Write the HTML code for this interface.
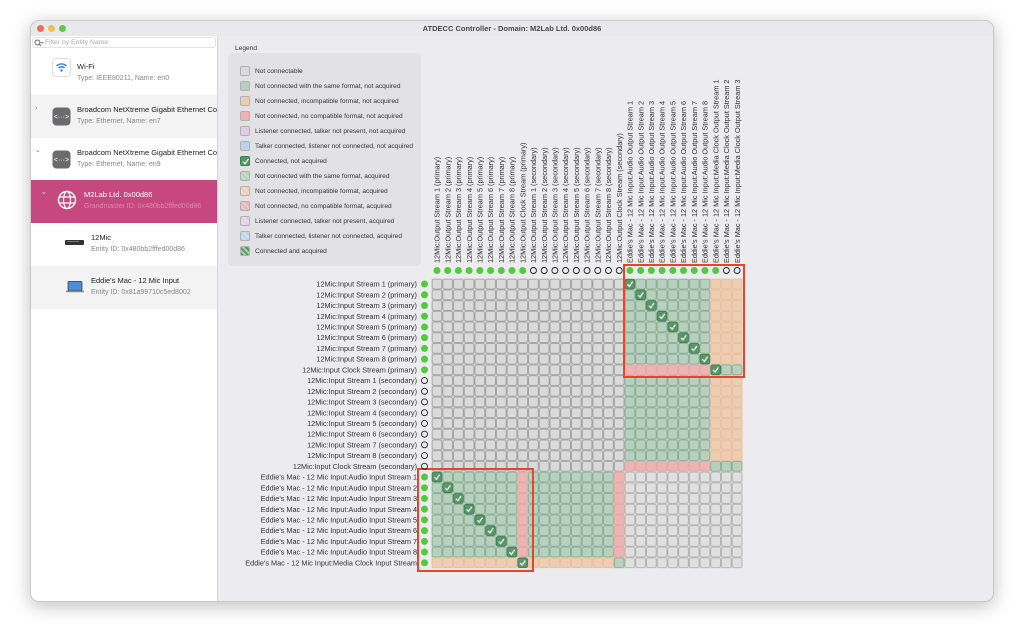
<!DOCTYPE html>
<html><head><meta charset="utf-8"><style>
*{margin:0;padding:0;box-sizing:border-box}
body{width:1024px;height:642px;background:#fff;font-family:"Liberation Sans",sans-serif;position:relative;overflow:hidden}
.win{position:absolute;left:30px;top:20px;width:964px;height:582px;border-radius:9px;background:#ececee;box-shadow:0 4px 18px rgba(0,0,0,.25);overflow:hidden;border:1px solid #c9c9c9}
.tb{position:absolute;left:0;top:0;width:100%;height:15px;background:#e9e9eb}
.tl{position:absolute;top:4px;width:7px;height:7px;border-radius:50%}
.title{position:absolute;top:3px;left:0;width:100%;text-align:center;font-size:7.5px;font-weight:bold;color:#4a4a4a}
.side{position:absolute;left:0;top:15px;width:187px;height:567px;background:#fff;border-right:1px solid #d6d6d6;overflow:hidden}
.search{position:absolute;left:1px;top:1px;width:184px;height:11px;background:#fff;border:1px solid #e3e3e3;border-radius:3px;font-size:6.8px;color:#aaa;padding-left:12px;line-height:10px}
.row{position:absolute;left:0;width:186px;height:43px;overflow:hidden}
.row .t1{position:absolute;top:10px;font-size:7.5px;color:#222;white-space:nowrap}
.row .t2{position:absolute;top:23px;font-size:7px;color:#888;white-space:nowrap}
.ic{position:absolute}
.leg-l{position:absolute;left:235px;top:45px;font-size:6.6px;color:#333}
.leg{position:absolute;left:228px;top:53px;width:193px;height:213px;background:#e2e2e4;border-radius:5px}
.li{position:absolute;left:12px;width:180px;height:11px;font-size:6.6px;color:#333;line-height:11px}
.li i{position:absolute;left:0;top:0;width:10px;height:10px;border-radius:2px;border:1px solid #b0b0b0}
.li span{position:absolute;left:15px;top:0}
</style></head><body>
<div class="win">
 <div class="tb">
  <div class="tl" style="left:6px;background:#ed6a5e"></div>
  <div class="tl" style="left:17px;background:#f5bf4f"></div>
  <div class="tl" style="left:28px;background:#61c554"></div>
  <div class="title">ATDECC Controller - Domain: M2Lab Ltd. 0x00d86</div>
 </div>
 <div class="side">
  <div class="search">Filter by Entity Name</div>
  <svg style="position:absolute;left:3px;top:3px" width="10" height="8"><circle cx="3.5" cy="3.5" r="2.5" fill="none" stroke="#666" stroke-width="1"/><line x1="5.3" y1="5.3" x2="7" y2="7" stroke="#666"/><path d="M7 3l1.2 1.2L9.4 3" stroke="#666" fill="none" stroke-width=".8"/></svg>
  <div class="row" style="top:16px;background:#fff">
   <svg class="ic" style="left:21px;top:6px" width="19" height="19"><rect x=".5" y=".5" width="18" height="18" rx="4" fill="#fff" stroke="#ddd"/><path d="M4.5 8a7 7 0 0 1 10 0M6.5 10a4.2 4.2 0 0 1 6 0" stroke="#2f7ff0" stroke-width="1.4" fill="none"/><circle cx="9.5" cy="12.5" r="1.2" fill="#2f7ff0"/></svg>
   <div class="t1" style="left:46px">Wi-Fi</div><div class="t2" style="left:46px">Type: IEEE80211, Name: en0</div>
  </div>
  <div class="row" style="top:59px;background:#f3f3f4">
   <div style="position:absolute;left:4px;top:10px;font-size:7px;color:#777">›</div>
   <svg class="ic" style="left:21px;top:12px" width="19" height="19"><rect x=".5" y=".5" width="18" height="18" rx="4" fill="#6b6b6d"/><text x="9.5" y="12" font-size="7" fill="#fff" text-anchor="middle" font-family="Liberation Sans">&lt;···&gt;</text></svg>
   <div class="t1" style="left:46px">Broadcom NetXtreme Gigabit Ethernet Cont</div><div class="t2" style="left:46px">Type: Ethernet, Name: en7</div>
  </div>
  <div class="row" style="top:102px;background:#fff">
   <div style="position:absolute;left:4px;top:8px;font-size:7px;color:#777">⌄</div>
   <svg class="ic" style="left:21px;top:12px" width="19" height="19"><rect x=".5" y=".5" width="18" height="18" rx="4" fill="#6b6b6d"/><text x="9.5" y="12" font-size="7" fill="#fff" text-anchor="middle" font-family="Liberation Sans">&lt;···&gt;</text></svg>
   <div class="t1" style="left:46px">Broadcom NetXtreme Gigabit Ethernet Cont</div><div class="t2" style="left:46px">Type: Ethernet, Name: en9</div>
  </div>
  <div class="row" style="top:144px;background:#c7487e">
   <div style="position:absolute;left:10px;top:8px;font-size:7px;color:#fff">⌄</div>
   <svg class="ic" style="left:26px;top:10px" width="20" height="20"><circle cx="10" cy="10" r="8.5" fill="none" stroke="#fff" stroke-width="1.4"/><ellipse cx="10" cy="10" rx="3.5" ry="8.5" fill="none" stroke="#fff" stroke-width="1.2"/><path d="M2 7h16M2 13h16" stroke="#fff" stroke-width="1.2"/></svg>
   <div class="t1" style="left:53px;color:#fff">M2Lab Ltd. 0x00d86</div><div class="t2" style="left:53px;color:#d98ab0">Grandmaster ID: 0x480bb2fffed00d86</div>
  </div>
  <div class="row" style="top:187px;background:#fff">
   <svg class="ic" style="left:34px;top:16px" width="20" height="8"><rect x="0" y="1" width="19" height="5" rx="1" fill="#333"/><rect x="2" y="2" width="12" height="1" fill="#777"/></svg>
   <div class="t1" style="left:60px">12Mic</div><div class="t2" style="left:60px">Entity ID: 0x480bb2fffed00d86</div>
  </div>
  <div class="row" style="top:230px;background:#f3f3f4">
   <svg class="ic" style="left:35px;top:15px" width="19" height="12"><rect x="2" y=".5" width="14" height="9" rx="1" fill="#4a8fd8" stroke="#333" stroke-width=".7"/><rect x="0" y="9.5" width="18" height="1.8" rx=".8" fill="#888"/></svg>
   <div class="t1" style="left:60px">Eddie's Mac - 12 Mic Input</div><div class="t2" style="left:60px">Entity ID: 0x81a99710c5ed8002</div>
  </div>
 </div>
</div>

<div class="leg-l">Legend</div>
<div class="leg">
 <div class="li" style="top:13px"><i style="background:#dcdcdc"></i><span>Not connectable</span></div>
 <div class="li" style="top:28px"><i style="background:#b6d1bd"></i><span>Not connected with the same format, not acquired</span></div>
 <div class="li" style="top:43px"><i style="background:#efcdb1"></i><span>Not connected, incompatible format, not acquired</span></div>
 <div class="li" style="top:58px"><i style="background:#edb2b2"></i><span>Not connected, no compatible format, not acquired</span></div>
 <div class="li" style="top:73px"><i style="background:#e0cdea"></i><span>Listener connected, talker not present, not acquired</span></div>
 <div class="li" style="top:88px"><i style="background:#bcd3ee"></i><span>Talker connected, listener not connected, not acquired</span></div>
 <div class="li" style="top:103px"><i style="background:#4f9a62;border-color:#3f7f50"></i><span>Connected, not acquired</span><svg style="position:absolute;left:1px;top:1px" width="9" height="9"><path d="M2 4.8l2 2L7.5 2" stroke="#fff" stroke-width="1.2" fill="none"/></svg></div>
 <div class="li" style="top:118px"><i style="background:repeating-linear-gradient(45deg,#b6d1bd 0 2px,#c9dccd 2px 4px)"></i><span>Not connected with the same format, acquired</span></div>
 <div class="li" style="top:133px"><i style="background:repeating-linear-gradient(45deg,#efcdb1 0 2px,#f5dcc8 2px 4px)"></i><span>Not connected, incompatible format, acquired</span></div>
 <div class="li" style="top:148px"><i style="background:repeating-linear-gradient(45deg,#edb2b2 0 2px,#f3c8c8 2px 4px)"></i><span>Not connected, no compatible format, acquired</span></div>
 <div class="li" style="top:163px"><i style="background:repeating-linear-gradient(45deg,#e0cdea 0 2px,#ebdef1 2px 4px)"></i><span>Listener connected, talker not present, acquired</span></div>
 <div class="li" style="top:178px"><i style="background:repeating-linear-gradient(45deg,#bcd3ee 0 2px,#d0e0f3 2px 4px)"></i><span>Talker connected, listener not connected, acquired</span></div>
 <div class="li" style="top:193px"><i style="background:repeating-linear-gradient(45deg,#4f9a62 0 2px,#a9cdb2 2px 4px)"></i><span>Connected and acquired</span></div>
</div>

<svg style="position:absolute;left:0;top:0" width="1024" height="642" font-family="Liberation Sans, sans-serif">
<defs>
 <pattern id="pg" patternUnits="userSpaceOnUse" x="431.6" y="278.7" width="10.72" height="10.72"><rect width="10.72" height="10.72" fill="#cfcfcf"/><rect x=".5" y=".5" width="9.72" height="9.72" rx="2" fill="#dadada" stroke="#9a9a9a" stroke-width=".8"/></pattern>
 <pattern id="pl" patternUnits="userSpaceOnUse" x="431.6" y="278.7" width="10.72" height="10.72"><rect width="10.72" height="10.72" fill="#d6d6d6"/><rect x=".5" y=".5" width="9.72" height="9.72" rx="2" fill="#e0e0e0" stroke="#acacac" stroke-width=".8"/></pattern>
 <pattern id="pn" patternUnits="userSpaceOnUse" x="431.6" y="278.7" width="10.72" height="10.72"><rect width="10.72" height="10.72" fill="#b2cdb9"/><rect x=".5" y=".5" width="9.72" height="9.72" rx="2" fill="#b6d1bd" stroke="#8aa591" stroke-width=".8"/></pattern>
 <pattern id="po" patternUnits="userSpaceOnUse" x="431.6" y="278.7" width="10.72" height="10.72"><rect width="10.72" height="10.72" fill="#efcdb1"/><rect x=".5" y=".5" width="9.72" height="9.72" rx="2" fill="#efcdb1" stroke="#e3bb9a" stroke-width=".6"/></pattern>
 <pattern id="pr" patternUnits="userSpaceOnUse" x="431.6" y="278.7" width="10.72" height="10.72"><rect width="10.72" height="10.72" fill="#edb4b4"/><rect x=".5" y=".5" width="9.72" height="9.72" rx="2" fill="#edb4b4" stroke="#e3a3a3" stroke-width=".6"/></pattern>
 <symbol id="ck" width="10.72" height="10.72"><rect x=".5" y=".5" width="9.72" height="9.72" rx="2" fill="#579868" stroke="#3f7a50" stroke-width=".8"/><path d="M2.8 5.6l2 2L8 3" stroke="#fff" stroke-width="1.2" fill="none"/></symbol>
</defs>
<rect x="431.6" y="278.7" width="192.96" height="192.96" fill="url(#pg)"/>
<rect x="624.56" y="278.7" width="85.76" height="85.76" fill="url(#pn)"/>
<rect x="624.56" y="375.18" width="85.76" height="85.76" fill="url(#pn)"/>
<rect x="710.32" y="278.7" width="32.16" height="85.76" fill="url(#po)"/>
<rect x="710.32" y="375.18" width="32.16" height="85.76" fill="url(#po)"/>
<rect x="624.56" y="364.46" width="85.76" height="10.72" fill="url(#pr)"/>
<rect x="624.56" y="460.94" width="85.76" height="10.72" fill="url(#pr)"/>
<rect x="710.32" y="364.46" width="32.16" height="10.72" fill="url(#pn)"/>
<rect x="710.32" y="460.94" width="32.16" height="10.72" fill="url(#pn)"/>
<rect x="431.6" y="471.66" width="85.76" height="85.76" fill="url(#pn)"/>
<rect x="517.36" y="471.66" width="10.72" height="85.76" fill="url(#pr)"/>
<rect x="528.08" y="471.66" width="85.76" height="85.76" fill="url(#pn)"/>
<rect x="613.84" y="471.66" width="10.72" height="85.76" fill="url(#pr)"/>
<rect x="624.56" y="471.66" width="117.92" height="96.48" fill="url(#pl)"/>
<rect x="431.6" y="557.42" width="192.96" height="10.72" fill="url(#po)"/>
<rect x="613.84" y="557.42" width="10.72" height="10.72" fill="url(#pn)"/>
<use href="#ck" x="624.56" y="278.7"/><use href="#ck" x="635.28" y="289.42"/><use href="#ck" x="646" y="300.14"/><use href="#ck" x="656.72" y="310.86"/><use href="#ck" x="667.44" y="321.58"/><use href="#ck" x="678.16" y="332.3"/><use href="#ck" x="688.88" y="343.02"/><use href="#ck" x="699.6" y="353.74"/><use href="#ck" x="710.32" y="364.46"/>
<use href="#ck" x="431.6" y="471.66"/><use href="#ck" x="442.32" y="482.38"/><use href="#ck" x="453.04" y="493.1"/><use href="#ck" x="463.76" y="503.82"/><use href="#ck" x="474.48" y="514.54"/><use href="#ck" x="485.2" y="525.26"/><use href="#ck" x="495.92" y="535.98"/><use href="#ck" x="506.64" y="546.7"/><use href="#ck" x="517.36" y="557.42"/>
<rect x="624" y="265" width="120" height="112" fill="none" stroke="#e8432c" stroke-width="2"/>
<rect x="418" y="469" width="115" height="102" fill="none" stroke="#e8432c" stroke-width="2"/>
<g fill="#4fcb3c">
<circle cx="436.96" cy="270.5" r="3.5"/><circle cx="447.68" cy="270.5" r="3.5"/><circle cx="458.4" cy="270.5" r="3.5"/><circle cx="469.12" cy="270.5" r="3.5"/><circle cx="479.84" cy="270.5" r="3.5"/><circle cx="490.56" cy="270.5" r="3.5"/><circle cx="501.28" cy="270.5" r="3.5"/><circle cx="512" cy="270.5" r="3.5"/><circle cx="522.72" cy="270.5" r="3.5"/>
<circle cx="629.92" cy="270.5" r="3.5"/><circle cx="640.64" cy="270.5" r="3.5"/><circle cx="651.36" cy="270.5" r="3.5"/><circle cx="662.08" cy="270.5" r="3.5"/><circle cx="672.8" cy="270.5" r="3.5"/><circle cx="683.52" cy="270.5" r="3.5"/><circle cx="694.24" cy="270.5" r="3.5"/><circle cx="704.96" cy="270.5" r="3.5"/><circle cx="715.68" cy="270.5" r="3.5"/>
<circle cx="424.5" cy="284.06" r="3.5"/><circle cx="424.5" cy="294.78" r="3.5"/><circle cx="424.5" cy="305.5" r="3.5"/><circle cx="424.5" cy="316.22" r="3.5"/><circle cx="424.5" cy="326.94" r="3.5"/><circle cx="424.5" cy="337.66" r="3.5"/><circle cx="424.5" cy="348.38" r="3.5"/><circle cx="424.5" cy="359.1" r="3.5"/><circle cx="424.5" cy="369.82" r="3.5"/>
<circle cx="424.5" cy="477.02" r="3.5"/><circle cx="424.5" cy="487.74" r="3.5"/><circle cx="424.5" cy="498.46" r="3.5"/><circle cx="424.5" cy="509.18" r="3.5"/><circle cx="424.5" cy="519.9" r="3.5"/><circle cx="424.5" cy="530.62" r="3.5"/><circle cx="424.5" cy="541.34" r="3.5"/><circle cx="424.5" cy="552.06" r="3.5"/><circle cx="424.5" cy="562.78" r="3.5"/>
</g>
<g fill="none" stroke="#222" stroke-width=".9">
<circle cx="533.44" cy="270.5" r="3"/><circle cx="544.16" cy="270.5" r="3"/><circle cx="554.88" cy="270.5" r="3"/><circle cx="565.6" cy="270.5" r="3"/><circle cx="576.32" cy="270.5" r="3"/><circle cx="587.04" cy="270.5" r="3"/><circle cx="597.76" cy="270.5" r="3"/><circle cx="608.48" cy="270.5" r="3"/><circle cx="619.2" cy="270.5" r="3"/><circle cx="726.4" cy="270.5" r="3"/><circle cx="737.12" cy="270.5" r="3"/>
<circle cx="424.5" cy="380.54" r="3"/><circle cx="424.5" cy="391.26" r="3"/><circle cx="424.5" cy="401.98" r="3"/><circle cx="424.5" cy="412.7" r="3"/><circle cx="424.5" cy="423.42" r="3"/><circle cx="424.5" cy="434.14" r="3"/><circle cx="424.5" cy="444.86" r="3"/><circle cx="424.5" cy="455.58" r="3"/><circle cx="424.5" cy="466.3" r="3"/>
</g>
<g font-size="7.3" fill="#333">
<text transform="translate(439.6,263) rotate(-90)">12Mic:Output Stream 1 (primary)</text>
<text transform="translate(450.3,263) rotate(-90)">12Mic:Output Stream 2 (primary)</text>
<text transform="translate(461,263) rotate(-90)">12Mic:Output Stream 3 (primary)</text>
<text transform="translate(471.8,263) rotate(-90)">12Mic:Output Stream 4 (primary)</text>
<text transform="translate(482.5,263) rotate(-90)">12Mic:Output Stream 5 (primary)</text>
<text transform="translate(493.2,263) rotate(-90)">12Mic:Output Stream 6 (primary)</text>
<text transform="translate(503.9,263) rotate(-90)">12Mic:Output Stream 7 (primary)</text>
<text transform="translate(514.6,263) rotate(-90)">12Mic:Output Stream 8 (primary)</text>
<text transform="translate(525.4,263) rotate(-90)">12Mic:Output Clock Stream (primary)</text>
<text transform="translate(536.1,263) rotate(-90)">12Mic:Output Stream 1 (secondary)</text>
<text transform="translate(546.8,263) rotate(-90)">12Mic:Output Stream 2 (secondary)</text>
<text transform="translate(557.5,263) rotate(-90)">12Mic:Output Stream 3 (secondary)</text>
<text transform="translate(568.2,263) rotate(-90)">12Mic:Output Stream 4 (secondary)</text>
<text transform="translate(579,263) rotate(-90)">12Mic:Output Stream 5 (secondary)</text>
<text transform="translate(589.7,263) rotate(-90)">12Mic:Output Stream 6 (secondary)</text>
<text transform="translate(600.4,263) rotate(-90)">12Mic:Output Stream 7 (secondary)</text>
<text transform="translate(611.1,263) rotate(-90)">12Mic:Output Stream 8 (secondary)</text>
<text transform="translate(621.8,263) rotate(-90)">12Mic:Output Clock Stream (secondary)</text>
<text transform="translate(632.6,263) rotate(-90)">Eddie's Mac - 12 Mic Input:Audio Output Stream 1</text>
<text transform="translate(643.3,263) rotate(-90)">Eddie's Mac - 12 Mic Input:Audio Output Stream 2</text>
<text transform="translate(654,263) rotate(-90)">Eddie's Mac - 12 Mic Input:Audio Output Stream 3</text>
<text transform="translate(664.7,263) rotate(-90)">Eddie's Mac - 12 Mic Input:Audio Output Stream 4</text>
<text transform="translate(675.5,263) rotate(-90)">Eddie's Mac - 12 Mic Input:Audio Output Stream 5</text>
<text transform="translate(686.2,263) rotate(-90)">Eddie's Mac - 12 Mic Input:Audio Output Stream 6</text>
<text transform="translate(696.9,263) rotate(-90)">Eddie's Mac - 12 Mic Input:Audio Output Stream 7</text>
<text transform="translate(707.6,263) rotate(-90)">Eddie's Mac - 12 Mic Input:Audio Output Stream 8</text>
<text transform="translate(718.4,263) rotate(-90)">Eddie's Mac - 12 Mic Input:Media Clock Output Stream 1</text>
<text transform="translate(729.1,263) rotate(-90)">Eddie's Mac - 12 Mic Input:Media Clock Output Stream 2</text>
<text transform="translate(739.8,263) rotate(-90)">Eddie's Mac - 12 Mic Input:Media Clock Output Stream 3</text>
</g>
<g font-size="7.3" fill="#333" text-anchor="end">
<text x="417" y="286.6">12Mic:Input Stream 1 (primary)</text>
<text x="417" y="297.3">12Mic:Input Stream 2 (primary)</text>
<text x="417" y="308.1">12Mic:Input Stream 3 (primary)</text>
<text x="417" y="318.8">12Mic:Input Stream 4 (primary)</text>
<text x="417" y="329.5">12Mic:Input Stream 5 (primary)</text>
<text x="417" y="340.2">12Mic:Input Stream 6 (primary)</text>
<text x="417" y="351">12Mic:Input Stream 7 (primary)</text>
<text x="417" y="361.7">12Mic:Input Stream 8 (primary)</text>
<text x="417" y="372.4">12Mic:Input Clock Stream (primary)</text>
<text x="417" y="383.1">12Mic:Input Stream 1 (secondary)</text>
<text x="417" y="393.8">12Mic:Input Stream 2 (secondary)</text>
<text x="417" y="404.6">12Mic:Input Stream 3 (secondary)</text>
<text x="417" y="415.3">12Mic:Input Stream 4 (secondary)</text>
<text x="417" y="426">12Mic:Input Stream 5 (secondary)</text>
<text x="417" y="436.7">12Mic:Input Stream 6 (secondary)</text>
<text x="417" y="447.5">12Mic:Input Stream 7 (secondary)</text>
<text x="417" y="458.2">12Mic:Input Stream 8 (secondary)</text>
<text x="417" y="468.9">12Mic:Input Clock Stream (secondary)</text>
<text x="417" y="479.6">Eddie's Mac - 12 Mic Input:Audio Input Stream 1</text>
<text x="417" y="490.3">Eddie's Mac - 12 Mic Input:Audio Input Stream 2</text>
<text x="417" y="501.1">Eddie's Mac - 12 Mic Input:Audio Input Stream 3</text>
<text x="417" y="511.8">Eddie's Mac - 12 Mic Input:Audio Input Stream 4</text>
<text x="417" y="522.5">Eddie's Mac - 12 Mic Input:Audio Input Stream 5</text>
<text x="417" y="533.2">Eddie's Mac - 12 Mic Input:Audio Input Stream 6</text>
<text x="417" y="543.9">Eddie's Mac - 12 Mic Input:Audio Input Stream 7</text>
<text x="417" y="554.7">Eddie's Mac - 12 Mic Input:Audio Input Stream 8</text>
<text x="417" y="565.4">Eddie's Mac - 12 Mic Input:Media Clock Input Stream</text>
</g>
</svg>
</body></html>
